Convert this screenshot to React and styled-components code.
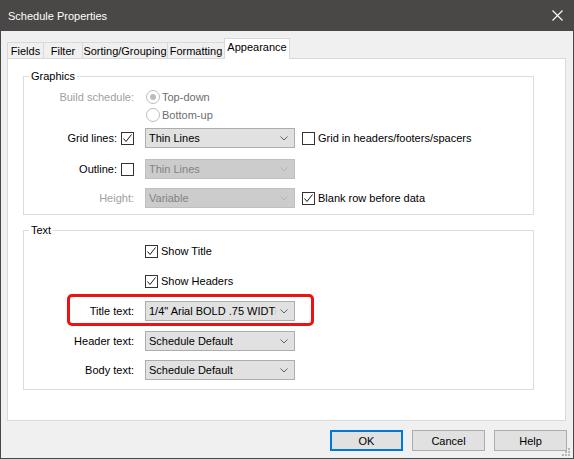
import React from "react";
import styled, { createGlobalStyle } from "styled-components";

const GlobalStyle = createGlobalStyle`
  html, body {
    margin: 0;
    padding: 0;
    background: #ffffff;
  }
  body {
    font-family: "Liberation Sans", Arial, sans-serif;
    font-size: 11px;
  }
`;

const tabs = [
  { name: "Fields", w: 37 },
  { name: "Filter", w: 40 },
  { name: "Sorting/Grouping", w: 86 },
  { name: "Formatting", w: 58 },
  { name: "Appearance", w: 66, active: true },
];

function Chevron({ disabled }) {
  return (
    <svg width="8" height="5" viewBox="0 0 8 5">
      <polyline
        points="0.5,0.5 4,4 7.5,0.5"
        fill="none"
        stroke={disabled ? "#b4b4b4" : "#606060"}
        strokeWidth="1"
      />
    </svg>
  );
}

function Check({ checked }) {
  return (
    <CheckBox>
      {checked && (
        <svg width="11" height="11" viewBox="0 0 11 11">
          <polyline
            points="1.5,5.5 4,8.5 9.5,1.5"
            fill="none"
            stroke="#1a1a1a"
            strokeWidth="1"
          />
        </svg>
      )}
    </CheckBox>
  );
}

function Dropdown({ value, disabled }) {
  return (
    <Select $disabled={disabled}>
      <SelectText>{value}</SelectText>
      <Chevron disabled={disabled} />
    </Select>
  );
}

function App() {
  return (
    <>
      <GlobalStyle />
      <Window>
        <TitleBar>
          <Caption>Schedule Properties</Caption>
          <svg width="11" height="11" viewBox="0 0 11 11">
            <path d="M0.5 0.5 L10.5 10.5 M10.5 0.5 L0.5 10.5" stroke="#ffffff" strokeWidth="1.1" />
          </svg>
        </TitleBar>
        <Body>
          <TabRow>
            {tabs.map((t) => (
              <Tab key={t.name} $w={t.w} $active={t.active}>
                {t.name}
              </Tab>
            ))}
          </TabRow>
          <Panel>
            <Group>
              <Legend>Graphics</Legend>
              <Row $h={18} $mt={4}>
                <Label $disabled>Build schedule:</Label>
                <Radio $checked />
                <RadioText>Top-down</RadioText>
              </Row>
              <Row $h={17}>
                <Label />
                <Radio />
                <RadioText>Bottom-up</RadioText>
              </Row>
              <Row $h={20} $mt={5}>
                <Label>
                  Grid lines:
                  <Check checked />
                </Label>
                <Dropdown value="Thin Lines" />
                <Extra>
                  <Check />
                  <span>Grid in headers/footers/spacers</span>
                </Extra>
              </Row>
              <Row $h={20} $mt={11}>
                <Label>
                  Outline:
                  <Check />
                </Label>
                <Dropdown value="Thin Lines" disabled />
              </Row>
              <Row $h={20} $mt={9}>
                <Label $disabled>Height:</Label>
                <Dropdown value="Variable" disabled />
                <Extra>
                  <Check checked />
                  <span>Blank row before data</span>
                </Extra>
              </Row>
            </Group>

            <Group $mt={7} $pb={9}>
              <Legend>Text</Legend>
              <Row $h={20} $mt={3}>
                <Label />
                <Option>
                  <Check checked />
                  <span>Show Title</span>
                </Option>
              </Row>
              <Row $h={20} $mt={10}>
                <Label />
                <Option>
                  <Check checked />
                  <span>Show Headers</span>
                </Option>
              </Row>
              <Row $h={20} $mt={10}>
                <Highlight />
                <Label>Title text:</Label>
                <Dropdown value={'1/4" Arial BOLD .75 WIDTH'} />
              </Row>
              <Row $h={20} $mt={10}>
                <Label>Header text:</Label>
                <Dropdown value="Schedule Default" />
              </Row>
              <Row $h={20} $mt={9}>
                <Label>Body text:</Label>
                <Dropdown value="Schedule Default" />
              </Row>
            </Group>
          </Panel>
          <Footer>
            <Button $default>OK</Button>
            <Button>Cancel</Button>
            <Button>Help</Button>
          </Footer>
        </Body>
        <Grip>
          <svg width="9" height="9" viewBox="0 0 9 9" fill="#b8b8b8">
            <rect x="6" y="0" width="2" height="2" />
            <rect x="3" y="3" width="2" height="2" />
            <rect x="6" y="3" width="2" height="2" />
            <rect x="0" y="6" width="2" height="2" />
            <rect x="3" y="6" width="2" height="2" />
            <rect x="6" y="6" width="2" height="2" />
          </svg>
        </Grip>
      </Window>
    </>
  );
}

export default App;

const Window = styled.div`
  position: relative;
  width: 574px;
  height: 459px;
  box-sizing: border-box;
  border: 1px solid #4a4846;
  border-top: none;
  background: #f0f0f0;
  display: flex;
  flex-direction: column;
`;

const TitleBar = styled.div`
  height: 31px;
  margin: 0 -1px;
  background: #4a4846;
  display: flex;
  align-items: center;
  justify-content: space-between;
  padding: 0 11px 0 8px;
  color: #ffffff;
  flex-shrink: 0;
`;

const Caption = styled.span`
  font-size: 11px;
`;

const Body = styled.div`
  padding: 7px 7px 0 6px;
  display: flex;
  flex-direction: column;
`;

const TabRow = styled.div`
  display: flex;
  align-items: flex-end;
  height: 20px;
  padding-left: 1px;
`;

const Tab = styled.div`
  position: relative;
  box-sizing: border-box;
  width: ${({ $w }) => $w}px;
  height: ${({ $active }) => ($active ? "21px" : "16px")};
  margin-left: -1px;
  margin-bottom: ${({ $active }) => ($active ? "-1px" : "0")};
  border: 1px solid #d9d9d9;
  border-bottom: none;
  background: ${({ $active }) => ($active ? "#ffffff" : "#f0f0f0")};
  z-index: ${({ $active }) => ($active ? 1 : 0)};
  display: flex;
  align-items: center;
  justify-content: center;
  padding-bottom: ${({ $active }) => ($active ? "4px" : "0")};
  color: #000000;
  white-space: nowrap;
  line-height: 14px;
`;

const Panel = styled.div`
  box-sizing: border-box;
  height: 363px;
  background: #ffffff;
  border: 1px solid #d9d9d9;
  padding: 9px 31px 0 15px;
`;

const Group = styled.fieldset`
  margin: ${({ $mt }) => $mt || 0}px 0 0 0;
  padding: 0 0 ${({ $pb }) => ($pb === undefined ? 6 : $pb)}px 0;
  border: 1px solid #dcdcdc;
  min-width: 0;
`;

const Legend = styled.legend`
  margin-left: 5px;
  padding: 0 2px;
  line-height: 16px;
  color: #000000;
`;

const Row = styled.div`
  position: relative;
  display: flex;
  align-items: center;
  height: ${({ $h }) => $h}px;
  margin-top: ${({ $mt }) => $mt || 0}px;
`;

const Label = styled.div`
  width: 110px;
  flex-shrink: 0;
  margin-right: 11px;
  display: flex;
  align-items: center;
  justify-content: flex-end;
  gap: 4px;
  color: ${({ $disabled }) => ($disabled ? "#a0a0a0" : "#000000")};
  white-space: nowrap;
`;

const CheckBox = styled.span`
  box-sizing: border-box;
  width: 13px;
  height: 13px;
  border: 1px solid #333333;
  background: #ffffff;
  display: inline-flex;
  align-items: center;
  justify-content: center;
  flex-shrink: 0;
`;

const Radio = styled.span`
  box-sizing: border-box;
  width: 14px;
  height: 14px;
  border-radius: 50%;
  border: 1px solid #bcbcbc;
  background: #ffffff;
  display: inline-flex;
  align-items: center;
  justify-content: center;
  margin-left: 1px;
  &::after {
    content: "";
    width: 6px;
    height: 6px;
    border-radius: 50%;
    background: ${({ $checked }) => ($checked ? "#bcbcbc" : "transparent")};
  }
`;

const RadioText = styled.span`
  margin-left: 2px;
  color: #6d6d6d;
`;

const Select = styled.div`
  box-sizing: border-box;
  width: 150px;
  height: 20px;
  flex-shrink: 0;
  display: flex;
  align-items: center;
  justify-content: space-between;
  gap: 4px;
  padding: 0 6px 0 3px;
  border: 1px solid ${({ $disabled }) => ($disabled ? "#bfbfbf" : "#adadad")};
  background: ${({ $disabled }) => ($disabled ? "#cccccc" : "#e1e1e1")};
  color: ${({ $disabled }) => ($disabled ? "#838383" : "#000000")};
`;

const SelectText = styled.span`
  overflow: hidden;
  white-space: nowrap;
  flex: 1;
`;

const Extra = styled.div`
  display: flex;
  align-items: center;
  gap: 3px;
  margin-left: 7px;
  white-space: nowrap;
`;

const Option = styled.div`
  display: flex;
  align-items: center;
  gap: 3px;
`;

const Highlight = styled.div`
  position: absolute;
  left: 43px;
  top: -7px;
  width: 247px;
  height: 32px;
  box-sizing: border-box;
  border: 3px solid #ee1111;
  border-radius: 5px;
  pointer-events: none;
`;

const Footer = styled.div`
  display: flex;
  justify-content: flex-end;
  gap: 9px;
  margin-top: 9px;
  margin-right: -1px;
`;

const Button = styled.div`
  box-sizing: border-box;
  width: 73px;
  height: 21px;
  display: flex;
  align-items: center;
  justify-content: center;
  background: #e1e1e1;
  border: ${({ $default }) => ($default ? "2px solid #0078d7" : "1px solid #adadad")};
  color: #000000;
`;

const Grip = styled.div`
  position: absolute;
  right: 2px;
  bottom: 1px;
  display: flex;
`;
